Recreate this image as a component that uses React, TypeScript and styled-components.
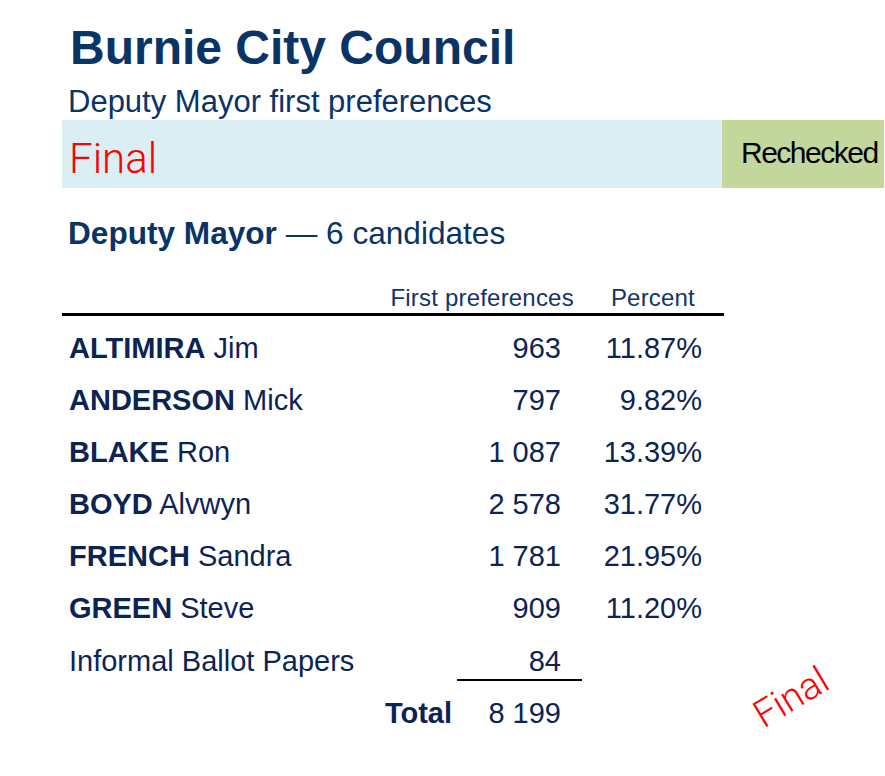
import React from "react";
import styled, { createGlobalStyle } from "styled-components";

const GlobalStyle = createGlobalStyle`
  html, body { margin: 0; padding: 0; background: #ffffff; }
  body { font-family: "Liberation Sans", Arial, sans-serif; }
  * { box-sizing: border-box; }
`;

const NAVY = "#0a3366";
const ROW_NAVY = "#0c2454";

const Page = styled.div`
  position: relative;
  width: 885px;
  height: 776px;
  padding-top: 24px;
  overflow: hidden;
  background: #ffffff;
`;

const Title = styled.h1`
  margin: 0 0 0 70px;
  font: 700 48px/48px "Liberation Sans", Arial, sans-serif;
  color: ${NAVY};
`;

const Subtitle = styled.div`
  margin: 14px 0 0 68px;
  font: 400 31px/31px "Liberation Sans", Arial, sans-serif;
  color: ${NAVY};
`;

const Band = styled.div`
  display: flex;
  width: 822px;
  height: 68px;
  margin: 3px 0 0 62px;
`;

const BandStatus = styled.div`
  flex: 1;
  background: #daeef3;
  padding: 18px 0 0 7px;
  font: 300 42px/42px Roboto, "Liberation Sans", sans-serif;
  color: #ff0000;
`;

const BandCheck = styled.div`
  width: 162px;
  background: #c3d69b;
  padding: 18px 0 0 19px;
  font: 400 30px/30px "Liberation Sans", Arial, sans-serif;
  letter-spacing: -1.5px;
  color: #000000;
`;

const SectionHeading = styled.h2`
  margin: 30px 0 0 68px;
  font: 400 31.6px/31px "Liberation Sans", Arial, sans-serif;
  color: ${NAVY};
  strong { font-weight: 700; }
`;

const Table = styled.div`
  margin: 34px 0 0 62px;
  width: 662px;
`;

const HeaderRow = styled.div`
  display: grid;
  grid-template-columns: 1fr auto auto;
  column-gap: 37px;
  padding-right: 29px;
  font: 400 24px/30px "Liberation Sans", Arial, sans-serif;
  letter-spacing: 0.2px;
  color: #10356a;
  border-bottom: 3px solid #000000;
`;

const Rows = styled.div`
  padding-top: 6px;
`;

const Row = styled.div<{ $lh?: number; $mt?: number }>`
  display: grid;
  grid-template-columns: 1fr 100px 141px;
  padding: 0 22px 0 7px;
  margin-top: ${(p) => p.$mt ?? 0}px;
  font: 400 29px/${(p) => p.$lh ?? 52}px "Liberation Sans", Arial, sans-serif;
  color: ${ROW_NAVY};
  white-space: nowrap;
  b { font-weight: 700; }
`;

const Cell = styled.div<{ $align?: "left" | "right"; $pr?: number }>`
  text-align: ${(p) => p.$align ?? "left"};
  padding-right: ${(p) => p.$pr ?? 0}px;
`;

const SumRule = styled.div`
  margin-left: 395px;
  width: 125px;
  height: 2px;
  background: #000000;
`;

const Stamp = styled.div`
  position: absolute;
  left: 751px;
  top: 678px;
  transform: rotate(-31deg);
  font: 300 38px/38px Roboto, "Liberation Sans", sans-serif;
  color: #ff0000;
`;

const candidates = [
  { last: "ALTIMIRA", first: "Jim", votes: "963", pct: "11.87%" },
  { last: "ANDERSON", first: "Mick", votes: "797", pct: "9.82%" },
  { last: "BLAKE", first: "Ron", votes: "1 087", pct: "13.39%" },
  { last: "BOYD", first: "Alvwyn", votes: "2 578", pct: "31.77%" },
  { last: "FRENCH", first: "Sandra", votes: "1 781", pct: "21.95%" },
  { last: "GREEN", first: "Steve", votes: "909", pct: "11.20%" },
];

export default function App() {
  return (
    <>
      <GlobalStyle />
      <Page>
        <Title>Burnie City Council</Title>
        <Subtitle>Deputy Mayor first preferences</Subtitle>
        <Band>
          <BandStatus>Final</BandStatus>
          <BandCheck>Rechecked</BandCheck>
        </Band>
        <SectionHeading>
          <strong>Deputy Mayor</strong> — 6 candidates
        </SectionHeading>
        <Table>
          <HeaderRow>
            <span />
            <span>First preferences</span>
            <span>Percent</span>
          </HeaderRow>
          <Rows>
            {candidates.map((c) => (
              <Row key={c.last}>
                <Cell>
                  <b>{c.last}</b> {c.first}
                </Cell>
                <Cell $align="right">{c.votes}</Cell>
                <Cell $align="right">{c.pct}</Cell>
              </Row>
            ))}
            <Row $lh={36} $mt={9}>
              <Cell>Informal Ballot Papers</Cell>
              <Cell $align="right">84</Cell>
              <Cell />
            </Row>
            <SumRule />
            <Row $mt={6}>
              <Cell $align="right" $pr={9}>
                <b>Total</b>
              </Cell>
              <Cell $align="right">8 199</Cell>
              <Cell />
            </Row>
          </Rows>
        </Table>
        <Stamp>Final</Stamp>
      </Page>
    </>
  );
}
